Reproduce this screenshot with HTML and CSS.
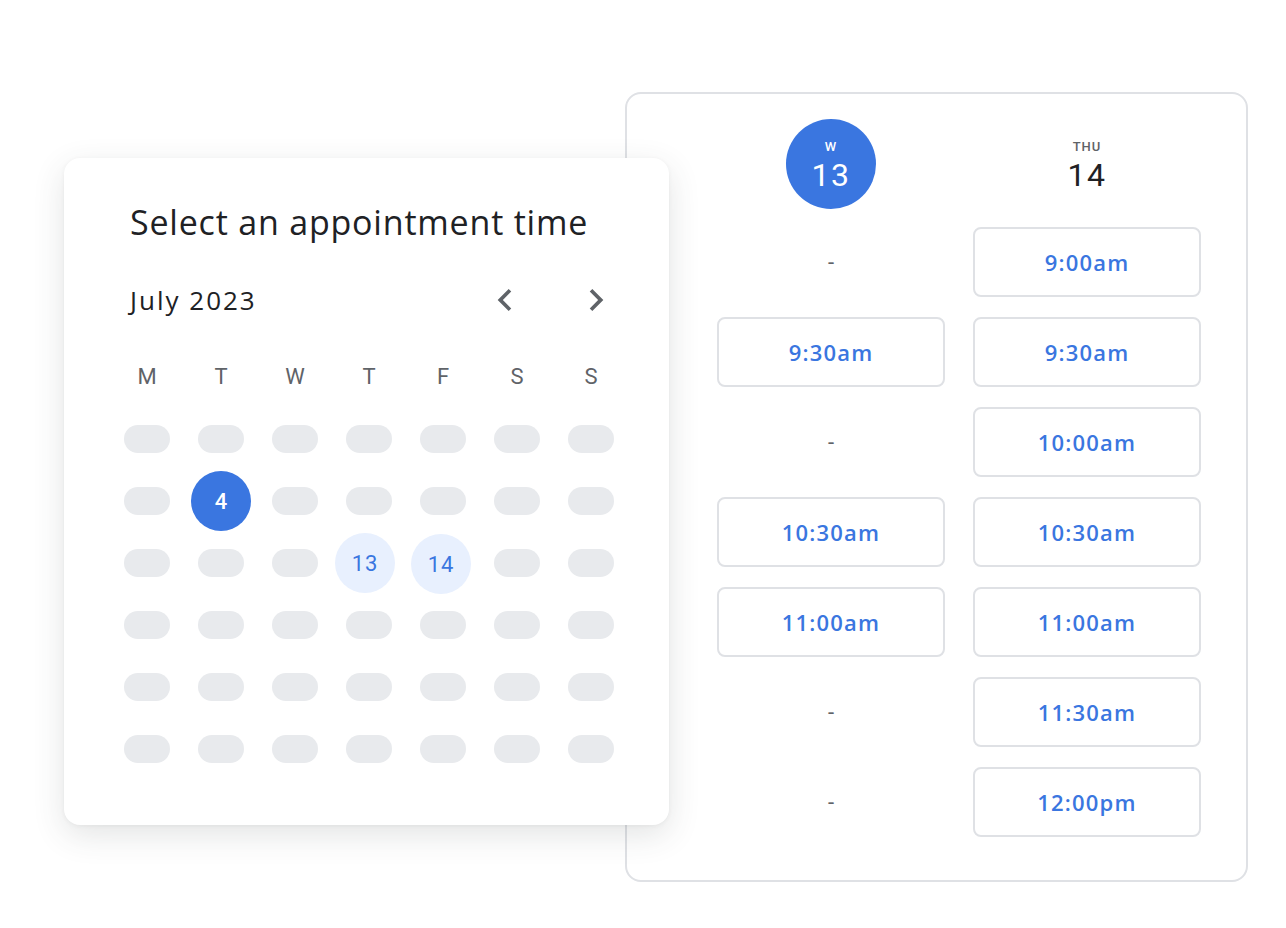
FILE: index.html
```html
<!DOCTYPE html>
<html lang="en">
<head>
<meta charset="utf-8">
<title>Select an appointment time</title>
<link rel="stylesheet" href="styles.css">
</head>
<body>
<div class="stage">
  <section class="slots">
    <div class="slot-head">
      <div class="day day-selected"><span class="dow">W</span><span class="dnum">13</span></div>
      <div class="day"><span class="dow">THU</span><span class="dnum">14</span></div>
    </div>
    <div class="slot-grid">
      <span class="dash">-</span><button class="slot">9:00am</button>
      <button class="slot">9:30am</button><button class="slot">9:30am</button>
      <span class="dash">-</span><button class="slot">10:00am</button>
      <button class="slot">10:30am</button><button class="slot">10:30am</button>
      <button class="slot">11:00am</button><button class="slot">11:00am</button>
      <span class="dash">-</span><button class="slot">11:30am</button>
      <span class="dash">-</span><button class="slot">12:00pm</button>
    </div>
  </section>

  <section class="card">
    <h1 class="title">Select an appointment time</h1>
    <div class="month-row">
      <span class="month">July 2023</span>
      <div class="nav">
        <button class="nav-btn" aria-label="Previous month">
          <svg viewBox="0 0 24 24" width="44" height="44"><path d="M15.41 7.41L14 6l-6 6 6 6 1.41-1.41L10.83 12z"/></svg>
        </button>
        <button class="nav-btn" aria-label="Next month">
          <svg viewBox="0 0 24 24" width="44" height="44"><path d="M8.59 16.59L10 18l6-6-6-6-1.41 1.41L13.17 12z"/></svg>
        </button>
      </div>
    </div>
    <div class="weekdays">
      <span>M</span><span>T</span><span>W</span><span>T</span><span>F</span><span>S</span><span>S</span>
    </div>
    <div class="days">
      <span class="cell"><i class="pill"></i></span><span class="cell"><i class="pill"></i></span><span class="cell"><i class="pill"></i></span><span class="cell"><i class="pill"></i></span><span class="cell"><i class="pill"></i></span><span class="cell"><i class="pill"></i></span><span class="cell"><i class="pill"></i></span>
      <span class="cell"><i class="pill"></i></span><span class="cell"><b class="circle circle-today">4</b></span><span class="cell"><i class="pill"></i></span><span class="cell"><i class="pill"></i></span><span class="cell"><i class="pill"></i></span><span class="cell"><i class="pill"></i></span><span class="cell"><i class="pill"></i></span>
      <span class="cell"><i class="pill"></i></span><span class="cell"><i class="pill"></i></span><span class="cell"><i class="pill"></i></span><span class="cell cell-13"><b class="circle circle-avail">13</b></span><span class="cell cell-14"><b class="circle circle-avail">14</b></span><span class="cell"><i class="pill"></i></span><span class="cell"><i class="pill"></i></span>
      <span class="cell"><i class="pill"></i></span><span class="cell"><i class="pill"></i></span><span class="cell"><i class="pill"></i></span><span class="cell"><i class="pill"></i></span><span class="cell"><i class="pill"></i></span><span class="cell"><i class="pill"></i></span><span class="cell"><i class="pill"></i></span>
      <span class="cell"><i class="pill"></i></span><span class="cell"><i class="pill"></i></span><span class="cell"><i class="pill"></i></span><span class="cell"><i class="pill"></i></span><span class="cell"><i class="pill"></i></span><span class="cell"><i class="pill"></i></span><span class="cell"><i class="pill"></i></span>
      <span class="cell"><i class="pill"></i></span><span class="cell"><i class="pill"></i></span><span class="cell"><i class="pill"></i></span><span class="cell"><i class="pill"></i></span><span class="cell"><i class="pill"></i></span><span class="cell"><i class="pill"></i></span><span class="cell"><i class="pill"></i></span>
    </div>
  </section>
</div>
</body>
</html>
```

FILE: styles.css
```css
* { box-sizing: border-box; }

html, body {
  margin: 0;
  padding: 0;
  background: #ffffff;
}

body {
  font-family: "Open Sans", Roboto, "Liberation Sans", sans-serif;
  color: #202124;
}

.stage {
  position: relative;
  width: 1286px;
  height: 928px;
  padding: 92px 0 0 625px;
}

/* ---------- right panel: time slots ---------- */
.slots {
  width: 623px;
  height: 790px;
  border: 2px solid #dfe1e5;
  border-radius: 16px;
  padding: 25px 0 0 90px;
  background: #ffffff;
}

.slot-head {
  display: grid;
  grid-template-columns: 228px 228px;
  column-gap: 28px;
  height: 90px;
  margin-bottom: 18px;
}

.day {
  justify-self: center;
  width: 90px;
  height: 90px;
  border-radius: 50%;
  display: flex;
  flex-direction: column;
  align-items: center;
  justify-content: center;
  gap: 2px;
  padding-top: 4px;
}

.day-selected {
  background: #3a76e0;
  color: #ffffff;
}

.dow {
  font-family: Roboto, "Liberation Sans", sans-serif;
  font-size: 13px;
  line-height: 16px;
  font-weight: 500;
  letter-spacing: 1px;
  color: #5f6368;
}

.day-selected .dow { color: #ffffff; }

.dnum {
  font-family: Roboto, "Liberation Sans", sans-serif;
  font-size: 32px;
  line-height: 36px;
  font-weight: 400;
  letter-spacing: 1.5px;
}

.slot-grid {
  display: grid;
  grid-template-columns: 228px 228px;
  grid-auto-rows: 70px;
  column-gap: 28px;
  row-gap: 20px;
}

.slot {
  margin: 0;
  padding: 0;
  background: #ffffff;
  border: 2px solid #dfe1e5;
  border-radius: 8px;
  font-family: "Open Sans", Roboto, sans-serif;
  font-size: 22px;
  font-weight: 600;
  letter-spacing: 1.2px;
  color: #3a76e0;
}

.dash {
  display: flex;
  align-items: center;
  justify-content: center;
  font-family: Roboto, sans-serif;
  font-size: 22px;
  color: #5f6368;
}

/* ---------- left card: calendar ---------- */
.card {
  position: absolute;
  left: 64px;
  top: 158px;
  width: 605px;
  height: 667px;
  background: #ffffff;
  border-radius: 16px;
  padding: 43px 42px 0 46px;
  box-shadow: 0 10px 32px rgba(60, 64, 67, 0.14), 0 1px 4px rgba(60, 64, 67, 0.06);
}

.title {
  margin: 0 0 0 20px;
  font-size: 34px;
  line-height: 42px;
  font-weight: 400;
  letter-spacing: 0.8px;
  color: #202124;
}

.month-row {
  display: flex;
  align-items: center;
  justify-content: space-between;
  height: 44px;
  margin: 35px 0 0 20px;
}

.month {
  font-size: 26px;
  font-weight: 500;
  letter-spacing: 2px;
  color: #202124;
}

.nav {
  display: flex;
  gap: 47px;
  margin-right: 9px;
}

.nav-btn {
  margin: 0;
  padding: 0;
  border: 0;
  background: transparent;
  width: 44px;
  height: 44px;
  display: flex;
}

.nav-btn svg { fill: #5f6368; }

.weekdays {
  display: grid;
  grid-template-columns: repeat(7, 74px);
  margin-top: 39px;
  height: 30px;
  align-items: center;
  justify-items: center;
  font-family: Roboto, sans-serif;
  font-size: 22px;
  color: #5f6368;
}

.days {
  display: grid;
  grid-template-columns: repeat(7, 74px);
  grid-auto-rows: 62px;
  margin-top: 17px;
}

.cell {
  display: flex;
  align-items: center;
  justify-content: center;
}

.cell-13 { padding-right: 8px; }
.cell-14 { padding-right: 4px; padding-top: 2px; }

.pill {
  display: block;
  width: 46px;
  height: 28px;
  border-radius: 14px;
  background: #e8eaed;
}

.circle {
  display: flex;
  align-items: center;
  justify-content: center;
  width: 60px;
  height: 60px;
  border-radius: 50%;
  font-family: Roboto, sans-serif;
  font-size: 22px;
  font-weight: 500;
}

.circle-today {
  background: #3a76e0;
  color: #ffffff;
}

.circle-avail {
  background: #e8f0fe;
  color: #3a76e0;
  font-weight: 400;
  letter-spacing: 1px;
}
```
